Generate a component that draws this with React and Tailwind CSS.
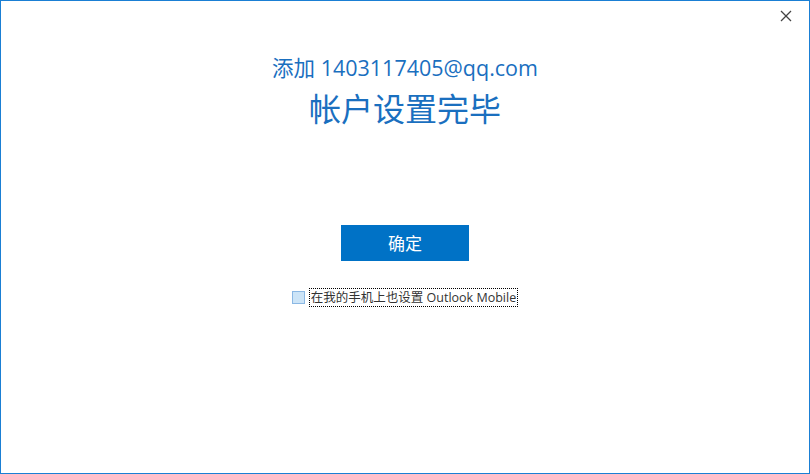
import React, { useState } from 'react';

const CloseIcon = () => (
  <svg width="12" height="12" viewBox="0 0 12 12" fill="none" stroke="#444" strokeWidth="1.2">
    <line x1="1" y1="1" x2="11" y2="11" />
    <line x1="11" y1="1" x2="1" y2="11" />
  </svg>
);

export default function App() {
  const [mobile, setMobile] = useState(false);

  return (
    <div
      className="w-[810px] h-[474px] bg-white border border-[#1a7fd4] flex flex-col overflow-hidden"
      style={{ fontFamily: '"Open Sans", "Noto Sans CJK SC", sans-serif' }}
    >
      {/* window chrome */}
      <div className="flex justify-end pr-[16px] pt-[8px] h-[30px]">
        <button className="w-[14px] h-[14px] flex items-center justify-center">
          <CloseIcon />
        </button>
      </div>

      <div className="flex flex-col items-center">
        <div className="mt-[23px] text-[21.5px] leading-[28px] text-[#1a6fbf]">添加 1403117405@qq.com</div>
        <div className="mt-[5px] text-[32px] leading-[44px] text-[#1a6fbf]">帐户设置完毕</div>

        <button className="mt-[94px] w-[128px] h-[36px] bg-[#0072c6] text-white text-[17px] leading-none">
          确定
        </button>

        <label className="mt-[27px] flex items-center gap-[4px] cursor-pointer">
          <span
            onClick={() => setMobile(!mobile)}
            className="w-[13px] h-[13px] border border-[#8bb8e4] bg-[#cce4f7] flex items-center justify-center"
          >
            {mobile && (
              <svg width="9" height="9" viewBox="0 0 9 9" fill="none" stroke="#333" strokeWidth="1.3">
                <path d="M1 4.5 L3.5 7 L8 1.5" />
              </svg>
            )}
          </span>
          <span className="border border-dotted border-black px-[1px] text-[12.5px] leading-[17px] text-[#333]">
            在我的手机上也设置 Outlook Mobile
          </span>
        </label>
      </div>
    </div>
  );
}
